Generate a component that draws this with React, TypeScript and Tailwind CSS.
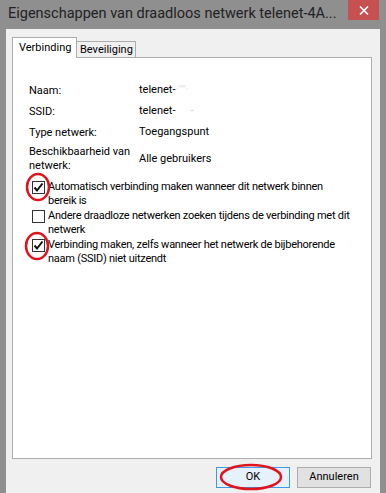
import React from 'react';

const font = { fontFamily: 'Roboto, Lato, "Liberation Sans", sans-serif' };

function Check({ checked }: { checked: boolean }) {
	return (
		<div className="w-[13px] h-[13px] border border-[#333333] bg-white flex items-center justify-center shrink-0">
			{checked && (
				<svg width="11" height="11" viewBox="0 0 11 11">
					<path d="M1.5 5.5 L4 8.5 L9.5 1.5" stroke="#111" strokeWidth="2" fill="none" />
				</svg>
			)}
		</div>
	);
}

function Row({ label, value, tall }: { label: React.ReactNode; value: React.ReactNode; tall?: boolean }) {
	return (
		<div className={`flex items-center ${tall ? 'h-[32px]' : 'h-[21px]'}`}>
			<div className="w-[110px] leading-[14px] whitespace-nowrap">{label}</div>
			<div className="whitespace-nowrap">{value}</div>
		</div>
	);
}

function Option({ checked, lines }: { checked: boolean; lines: string[] }) {
	return (
		<div className="flex gap-[3px] items-start">
			<Check checked={checked} />
			<div className="leading-[14px] -mt-[1px] whitespace-nowrap tracking-[-0.25px]">
				{lines.map((l, i) => (
					<div key={i}>{l}</div>
				))}
			</div>
		</div>
	);
}

export default function App() {
	return (
		<div className="w-[386px] h-[493px] bg-[#8f8f8f] flex flex-col relative overflow-hidden text-[11px] text-black" style={font}>
			<div className="h-[29px] flex items-start shrink-0">
				<div className="pl-[8px] pt-[4px] text-[14.5px] text-[#222] leading-[20px] flex-1 whitespace-nowrap">
					Eigenschappen van draadloos netwerk telenet-4A...
				</div>
				<div className="w-[31px] h-[20px] bg-[#c75050] mr-[7px] flex items-center justify-center shrink-0">
					<svg width="10" height="9" viewBox="0 0 10 9">
						<path d="M1 0.5 L9 8.5 M9 0.5 L1 8.5" stroke="#fff" strokeWidth="1.6" />
					</svg>
				</div>
			</div>
			<div className="mx-[6px] flex-1 bg-[#f0f0f0] pt-[8px] pl-[6px] pr-[8px] flex flex-col">
				<div className="flex items-end h-[20px]">
					<div className="h-[21px] w-[65px] bg-white border border-b-0 border-[#adadad] pl-[6px] pt-[2px] relative z-10 -mb-px leading-[16px] whitespace-nowrap">
						Verbinding
					</div>
					<div className="h-[16px] w-[59px] bg-[#f0f0f0] border border-l-0 border-b-0 border-[#adadad] pl-[3px] leading-[15px] whitespace-nowrap">
						Beveiliging
					</div>
				</div>
				<div className="h-[402px] bg-white border border-[#adadad] pl-[16px] pt-[22px]">
					<Row label="Naam:" value={<span>telenet-<span className="text-[#e6e6e6]">·'''''·</span></span>} />
					<Row label="SSID:" value={<span>telenet-<span className="text-[#d0d0d0] ml-[15px]">-</span></span>} />
					<Row label="Type netwerk:" value="Toegangspunt" />
					<Row
						tall
						label={
							<>
								<div>Beschikbaarheid van</div>
								<div>netwerk:</div>
							</>
						}
						value="Alle gebruikers"
					/>
					<div className="pl-[3px] pt-[6px] flex flex-col gap-[2px]">
						<Option checked lines={['Automatisch verbinding maken wanneer dit netwerk binnen', 'bereik is']} />
						<Option checked={false} lines={['Andere draadloze netwerken zoeken tijdens de verbinding met dit', 'netwerk']} />
						<Option checked lines={['Verbinding maken, zelfs wanneer het netwerk de bijbehorende', 'naam (SSID) niet uitzendt']} />
					</div>
				</div>
				<div className="flex justify-end gap-[7px] pt-[8px] pr-[1px]">
					<div className="w-[74px] h-[21px] bg-[#e5f1fb] border border-[#3c9ae8] flex items-center justify-center">OK</div>
					<div className="w-[74px] h-[21px] bg-[#e1e1e1] border border-[#adadad] flex items-center justify-center">Annuleren</div>
				</div>
			</div>
			<svg className="absolute left-0 top-0 pointer-events-none" width="386" height="493">
				<ellipse cx="38" cy="187" rx="11" ry="13" stroke="#e0141e" strokeWidth="2.5" fill="none" />
				<ellipse cx="37" cy="246" rx="11" ry="13" stroke="#e0141e" strokeWidth="2.5" fill="none" />
				<ellipse cx="251" cy="477" rx="30" ry="12" stroke="#e0141e" strokeWidth="2.5" fill="none" />
			</svg>
		</div>
	);
}
